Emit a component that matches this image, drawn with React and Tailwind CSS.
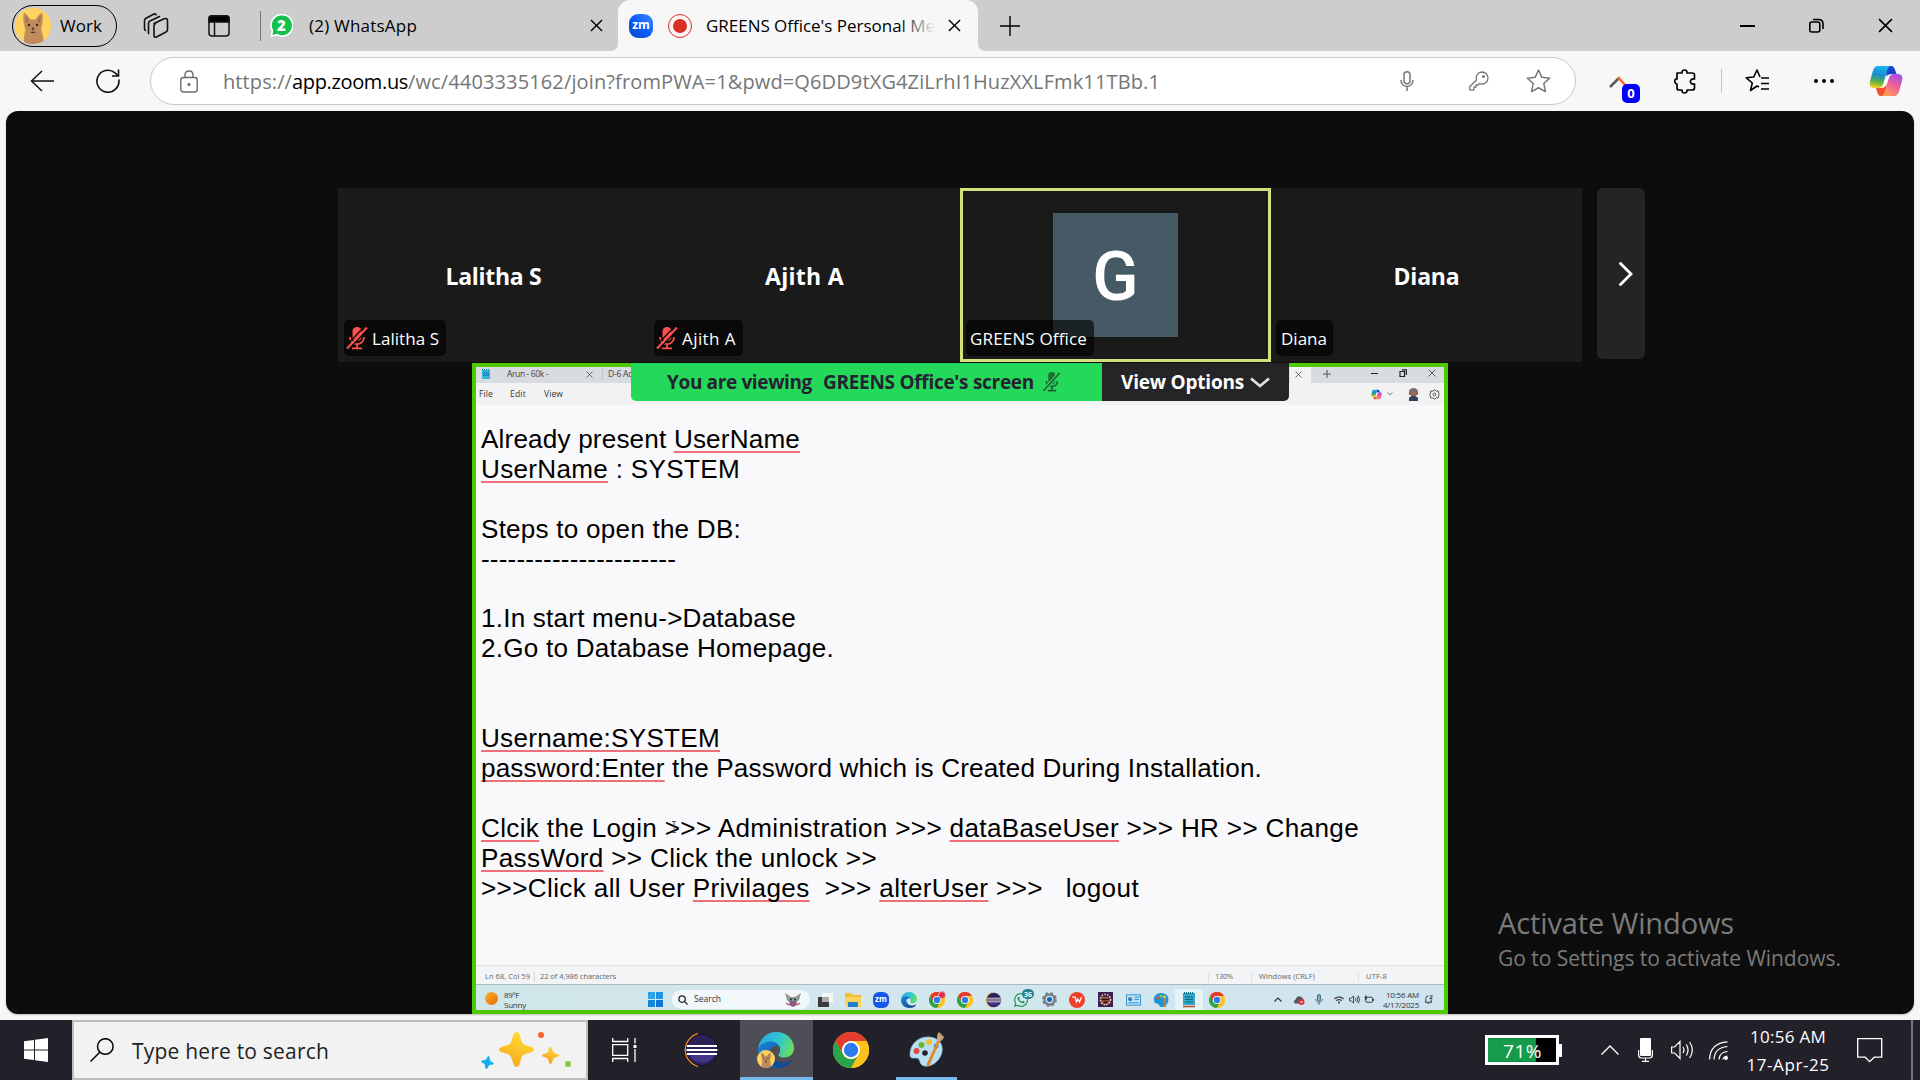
import React, { useLayoutEffect, useRef, useState } from "react";
import { FaWhatsapp, FaWifi } from "react-icons/fa";

/* One line of text whose letter spacing is tuned so that it spans `w` pixels. */
function Fit({ w, className = "", children }) {
  const ref = useRef(null);
  const [gap, setGap] = useState(0);
  useLayoutEffect(() => {
    const n = ref.current.textContent.length;
    setGap((w - ref.current.getBoundingClientRect().width) / n);
  }, [w]);
  return (
    <span ref={ref} className={"inline-block shrink-0 whitespace-pre " + className} style={{ letterSpacing: gap + "px" }}>
      {children}
    </span>
  );
}

function Cross({ className }) {
  return (
    <svg viewBox="0 0 14 14" className={className} fill="none" stroke="currentColor" strokeWidth="1.5">
      <path d="M1 1l12 12M13 1L1 13" />
    </svg>
  );
}

function Cat({ className }) {
  return (
    <svg viewBox="0 0 36 36" className={className}>
      <circle cx="18" cy="18" r="18" fill="#ffd35c" />
      <path d="M9 34c0-6 .5-9 1.500-12C8.500 15 7.500 10 9 4.500c3 2 5 4.500 6.500 7h5c1.500-2.500 3.500-5 6.500-7 1.500 5.500.5 10.500-1 17.500 1.500 3 2.500 7 2.500 11C22 37 14 37 9 34z" fill="#c08c5e" />
      <path d="M10.500 8c2 2 2.600 3 3.200 5l-3 2zM25.500 8c-2 2-2.600 3-3.200 5l3 2z" fill="#a8744a" />
      <circle cx="14" cy="17" r="1.200" fill="#3a2418" />
      <circle cx="22" cy="17" r="1.200" fill="#3a2418" />
      <path d="M16.800 20h2.400L18 21.600zM18 21.500v2m-2.500.5q2.500 1.500 5 0" fill="#3a2418" stroke="#3a2418" strokeWidth=".6" />
    </svg>
  );
}

function Copilot({ className, id }) {
  return (
    <svg viewBox="0 0 34 32" className={className}>
      <defs>
        <linearGradient id={id + "a"} x1=".5" y1="0" x2=".35" y2="1">
          <stop offset="0" stopColor="#18b4ee" />
          <stop offset=".4" stopColor="#1b8fd0" />
          <stop offset=".7" stopColor="#54b04a" />
          <stop offset="1" stopColor="#f3d21a" />
        </linearGradient>
        <linearGradient id={id + "b"} x1=".8" y1="0" x2=".3" y2="1">
          <stop offset="0" stopColor="#a24df0" />
          <stop offset=".5" stopColor="#ee5f9a" />
          <stop offset="1" stopColor="#ff9a56" />
        </linearGradient>
      </defs>
      <path d="M17 1h5c2.500 0 3.600 2 4.300 4.500L27.500 9h-5c-3 0-4 1.500-5 4.500z" fill="#1744c9" />
      <path d="M17 31h-5c-2.500 0-3.300-2-4-4.500L7 23h5c3 0 4.500-1.500 5.500-4.500z" fill="#f4512c" />
      <path d="M9 1h12c-2 1.500-2.700 4-3.500 7l-3 10c-1 3.500-2.500 5-5.500 5H5c-4 0-5-3-4-7L4 5.500C5 2.500 6.500 1 9 1z" fill={"url(#" + id + "a)"} />
      <path d="M25 31H13c2-1.500 2.700-4 3.500-7l3-10c1-3.500 2.500-5 5.500-5h4c4 0 5 3 4 7l-3 10.500c-1 3-2.500 4.500-5 4.500z" fill={"url(#" + id + "b)"} />
      <path d="M20.500 9.500c-2 .5-3.800 2-4.500 4.500l-2.500 8.500c2-.5 3.500-1.800 4.300-4.500z" fill="#fff" />
    </svg>
  );
}

function Edge({ className, id }) {
  return (
    <svg viewBox="0 0 36 36" className={className}>
      <defs>
        <linearGradient id={id + "a"} x1="0" y1=".3" x2="1" y2=".6">
          <stop offset="0" stopColor="#2aa7e6" />
          <stop offset=".55" stopColor="#2fc6cf" />
          <stop offset="1" stopColor="#6be05a" />
        </linearGradient>
        <linearGradient id={id + "b"} x1="0" y1="0" x2="1" y2="1">
          <stop offset="0" stopColor="#1a86d8" />
          <stop offset="1" stopColor="#0c4fa0" />
        </linearGradient>
      </defs>
      <path d="M0 17C1 7 9 0 18 0c10.500 0 18 7.500 18 16 0 6-4.500 9.500-9.500 9.500-4 0-6-1.300-6-2.600 0-1.200 1.700-1.900 1.700-5C22.200 13.500 18.500 10 12.500 10 7 10 2 13 0 17z" fill={"url(#" + id + "a)"} />
      <path d="M0 17c2-4.500 6.500-7.500 12-7.500 5 0 9 2.500 10 6.500-2-2-4.500-2.500-6.500-1.500-5 2.500-5.500 9-2 14 2.300 3.500 6 6 10.500 6.500-1.800.7-4 1-6 1C7.500 36 0 28 0 18z" fill={"url(#" + id + "b)"} />
      <path d="M13.500 20c-.5 6 5 10.500 11.500 10.500 3.500 0 6-1 8-2.300.8-.5 1.300 0 .8.800-2.300 3.800-6 6-10 6.700-6-.5-12-5-12-11.500 0-2 .7-3.500 1.700-4.200z" fill="#134a96" />
    </svg>
  );
}

function Chrome({ className }) {
  return (
    <svg viewBox="0 0 36 36" className={className}>
      <circle cx="18" cy="18" r="18" fill="#fbbc12" />
      <path d="M2.400 9A18 18 0 0 1 33.600 9H18a9 9 0 0 0-7.800 13.500z" fill="#e33b2e" />
      <path d="M2.400 9A18 18 0 0 0 18 36l7.800-13.500A9 9 0 0 1 10.200 22.500z" fill="#2ba24c" />
      <path d="M18 9h15.600A18 18 0 0 1 18 36l7.800-13.500A9 9 0 0 0 18 9z" fill="#fcc21b" />
      <circle cx="18" cy="18" r="9" fill="#fff" />
      <circle cx="18" cy="18" r="7.200" fill="#2f7bed" />
    </svg>
  );
}

function Eclipse({ className }) {
  return (
    <svg viewBox="0 0 36 36" className={className}>
      <path d="M16 1.500A17 17 0 0 0 16 34.500C6 30 4 23 4 18S6 6 16 1.500z" fill="#f7941e" stroke="#f7941e" />
      <circle cx="20" cy="18" r="15.700" fill="#2c2255" stroke="#15102b" />
      <path d="M7 22h26a14 14 0 0 1-26 0z" fill="#43358a" />
      <path d="M5 14h30M4.500 18h31M5 22h30" stroke="#fff" strokeWidth="1.800" />
    </svg>
  );
}

function Palette({ className }) {
  return (
    <svg viewBox="0 0 36 36" className={className}>
      <path d="M20 5C9 4 1 13 1 22c0 5 3 4 6 4 4 0 3 3 5 6 3 4 10 2 14-1 5-4 8-10 7-16S27 5.500 20 5z" fill="#b9dff2" stroke="#8cc3e2" strokeWidth=".7" />
      <circle cx="7.500" cy="19" r="3" fill="#e2483c" />
      <circle cx="12.500" cy="13" r="3" fill="#6cb83f" />
      <circle cx="20" cy="10" r="3" fill="#f5c32c" />
      <circle cx="27" cy="14" r="2.500" fill="#3aa0e0" />
      <circle cx="16" cy="21" r="2.800" fill="#22212a" />
      <path d="M30 8L19 33" stroke="#e08a2a" strokeWidth="3" strokeLinecap="round" />
      <path d="M28 8c0-4 0-6 2-8l5 5c-1 3-3 4-5 5z" fill="#c9a27a" />
    </svg>
  );
}

function MutedMic({ className }) {
  return (
    <svg viewBox="0 0 22 24" className={className}>
      <rect x="6.500" y="1" width="9" height="14" rx="4.500" fill="currentColor" />
      <path d="M4 11c0 9.500 14 9.500 14 0M11 18v4M6 22.300h10" stroke="currentColor" strokeWidth="1.800" fill="none" />
      <path d="M-.5 20.500L19 0M2.500 23.500L22 3" stroke="#0d0d0d" strokeWidth="1.300" />
      <path d="M1 22.500L21 1.500" stroke="currentColor" strokeWidth="2" />
    </svg>
  );
}

function Star({ className }) {
  return (
    <svg viewBox="0 0 24 24" className={className} fill="none" stroke="currentColor" strokeWidth="1.400" strokeLinejoin="round">
      <path d="M12 1l3.200 7 7.500.8-5.600 5.200 1.600 7.700L12 18l-6.700 3.700L6.900 14 1.300 8.800 8.800 8z" />
    </svg>
  );
}

function TabStrip() {
  return (
    <header className="flex h-[51px] items-center bg-[#cdcdcd] text-[17px] text-black">
      <div className="ml-3 flex h-[42px] w-[105px] shrink-0 items-center rounded-full border-[1.5px] border-black pl-[2px]">
        <Cat className="size-9" />
        <Fit w={42} className="ml-[9px]">Work</Fit>
      </div>
      <svg viewBox="0 0 26 26" className="ml-[26px] h-[26px] w-[26px] shrink-0" fill="none" stroke="#111" strokeWidth="1.600" strokeLinejoin="round" strokeLinecap="round">
        <path d="M11 10.500l10-4.700q3.500-1 3.500 2v9q0 1.500-1.500 2.200l-9.500 5q-2.500.8-2.500-1.500V13q0-1.800 1.500-2.500z" />
        <path d="M7 20.500V10.500q0-1.800 1.500-2.500l9.500-4.500M4 17.500q-1-.5-1-2V7.500q0-1.500 1.500-2.300L12.500 1q1.500-.5 2 .7" transform="translate(-1.500 0)" />
      </svg>
      <svg viewBox="0 0 22 22" className="ml-[39px] size-[22px] shrink-0" fill="none" stroke="#111" strokeWidth="1.500">
        <rect x="1" y="1" width="20" height="20" rx="3" />
        <path d="M1 3q0-2 2-2h16q2 0 2 2v4H1z" fill="#000" />
        <path d="M6.500 7v14" />
      </svg>
      <div className="ml-[30px] h-[30px] w-px shrink-0 bg-[#777]" />
      <div className="relative ml-[9px] flex size-[23px] shrink-0 items-center justify-center">
        <svg viewBox="0 0 23 24" className="absolute inset-0 size-full">
          <path d="M12 0a11.500 12 0 1 1-5 22.500L0 24l1.200-6A11.500 12 0 0 1 12 0z" fill="#fff" />
          <path d="M12 1.500a10 10.300 0 1 1-5 19L2 21.800l1-4.600A10 10.300 0 0 1 12 1.500z" fill="#12c14b" />
        </svg>
        <span className="relative font-['Open_Sans',sans-serif] text-[15px] leading-none font-extrabold text-white">2</span>
      </div>
      <Fit w={108} className="ml-4">(2) WhatsApp</Fit>
      <Cross className="ml-[173px] size-[13px] shrink-0" />
      <div className="relative ml-[15px] flex h-full w-[360px] shrink-0 items-center rounded-t-[12px] bg-[#f7f7f7] pl-[11px]">
        <svg viewBox="0 0 8 8" className="absolute bottom-0 -left-2 size-2"><path d="M8 0v8H0q8 0 8-8z" fill="#f7f7f7" /></svg>
        <svg viewBox="0 0 8 8" className="absolute -right-2 bottom-0 size-2"><path d="M0 0v8h8Q0 8 0 0z" fill="#f7f7f7" /></svg>
        <div className="flex size-6 items-center justify-center rounded-[9px] bg-gradient-to-bl from-[#3f8bff] via-[#0b5cff] to-[#0846c4] pb-[2px] text-[12px] leading-none font-bold text-white">zm</div>
        <div className="ml-[15px] flex size-6 shrink-0 items-center justify-center rounded-full border-[1.5px] border-[#d93025] bg-[#fdf5f5]">
          <div className="size-[14px] rounded-full bg-[#d93025]" />
        </div>
        <div className="relative ml-[14px] w-[229px] shrink-0">
          <Fit w={229}>GREENS Office's Personal Me</Fit>
          <div className="absolute inset-y-0 right-0 w-9 bg-gradient-to-r from-transparent to-[#f7f7f7]" />
        </div>
        <Cross className="ml-[13px] size-[13px] shrink-0" />
      </div>
      <svg viewBox="0 0 20 20" className="ml-[22px] size-5 shrink-0" stroke="#000" strokeWidth="1.400"><path d="M10 0v20M0 10h20" /></svg>
      <div className="ml-[720px] h-[2px] w-[15px] shrink-0 bg-black" />
      <svg viewBox="0 0 15 15" className="ml-[54px] size-[15px] shrink-0" fill="none" stroke="#000" strokeWidth="1.600">
        <rect x=".8" y="4" width="10" height="10" rx="2" /><path d="M4 1.500h5.500q4.500 0 4.500 4.500v5" />
      </svg>
      <Cross className="ml-[54px] size-[15px] shrink-0" />
    </header>
  );
}

function AddressRow() {
  return (
    <div className="flex h-[60px] items-center bg-[#f7f7f7] text-black">
      <svg viewBox="0 0 24 22" className="ml-[30px] h-[22px] w-6 shrink-0" fill="none" stroke="#111" strokeWidth="1.500"><path d="M24 11H1M12 1L1.500 11 12 21" /></svg>
      <svg viewBox="0 0 24 24" className="ml-[42px] size-6 shrink-0" fill="none" stroke="#111" strokeWidth="1.600"><path d="M22.800 10.500A11 11 0 1 1 19 3.800l3 3.200M22.500.5V7H16" /></svg>
      <div className="ml-[30px] flex h-12 w-[1426px] shrink-0 items-center rounded-full border border-[#cacaca] bg-white text-[#767676]">
        <svg viewBox="0 0 18 23" className="ml-[29px] h-[23px] w-[18px] shrink-0" fill="none" stroke="#6b6b6b" strokeWidth="1.400">
          <rect x=".8" y="7.500" width="16.400" height="14.500" rx="2.500" /><path d="M5 7.500V5q0-4 4-4t4 4v2.500" /><circle cx="9" cy="14.500" r=".9" fill="#6b6b6b" />
        </svg>
        <div className="ml-[25px] flex pt-[2px] text-[20px] leading-none">
          <Fit w={69}>https://</Fit>
          <Fit w={116} className="text-black">app.zoom.us</Fit>
          <Fit w={752}>/wc/4403335162/join?fromPWA=1&pwd=Q6DD9tXG4ZiLrhI1HuzXXLFmk11TBb.1</Fit>
        </div>
        <svg viewBox="0 0 14 20" className="ml-[240px] h-5 w-[14px] shrink-0" fill="none" stroke="currentColor" strokeWidth="1.500"><rect x="4" y=".8" width="6" height="12" rx="3" /><path d="M1 9c0 8.500 12 8.500 12 0M7 15.500V20" /></svg>
        <svg viewBox="0 0 20 20" className="ml-[55px] size-5 shrink-0" fill="none" stroke="currentColor" strokeWidth="1.300" strokeLinejoin="round"><path d="M13 1a6 6 0 0 1 0 12q-1.500 0-2.500-.5L9 14H7v2H5v2.500q-.5.700-1 .7H1.500q-.700 0-.700-.700V15.500L7.500 9A6 6 0 0 1 13 1z" /><circle cx="14.500" cy="5.500" r=".9" /></svg>
        <Star className="ml-[37px] size-[25px] shrink-0" />
      </div>
      <div className="relative ml-[33px] h-8 w-[31px] shrink-0">
        <svg viewBox="0 0 20 14" className="absolute top-[10px] left-0 h-[14px] w-5" fill="none" strokeWidth="2.600"><path d="M1 12l9-9" stroke="#5d5d5d" /><path d="M9 2l8 9" stroke="#ff6b2c" /></svg>
        <div className="absolute top-[19px] left-[13px] flex h-[19px] w-[18px] items-center justify-center rounded-[5px] bg-[#0000ff] text-[13px] leading-none font-bold text-white">0</div>
      </div>
      <svg viewBox="0 0 22 25" className="ml-[34px] h-[25px] w-[22px] shrink-0" fill="none" stroke="#000" strokeWidth="1.700" strokeLinejoin="round">
        <path d="M3 4h5c-.8-4 5.800-4 5 0h5q2.500 0 2.500 2v4c-5.500-1-5.500 6 0 5v4q0 2-2.500 2h-5c.8 4-5.800 4-5 0H5q-2 0-2-2v-4c-3-.500-3-5.500 0-5z" />
      </svg>
      <div className="ml-[25px] h-6 w-px shrink-0 bg-[#c4c4c4]" />
      <svg viewBox="0 0 25 25" className="ml-[23px] size-[25px] shrink-0" fill="none" stroke="#000" strokeWidth="1.600" strokeLinejoin="round"><path d="M14 18l-2-1-6.500 4.500L7.300 14 1.300 8.800 8.800 8 12 1l3 7M16 9h8M16 14.500h8M16 20h8" /></svg>
      <div className="ml-[44px] flex shrink-0 gap-1">
        <i className="size-1 rounded-full bg-black" /><i className="size-1 rounded-full bg-black" /><i className="size-1 rounded-full bg-black" />
      </div>
      <Copilot id="cpm" className="ml-[35px] h-[34px] w-[34px] shrink-0" />
    </div>
  );
}

function Tile({ name, nameW, tagW, muted, avatar, pad }) {
  return (
    <div className={"relative flex h-[174px] w-[311px] items-center justify-center bg-[#1a1a1a] " + (avatar ? "border-[3px] border-[#d5e07a]" : "")}>
      {avatar ? (
        <div className="flex h-[124px] w-[125px] items-center justify-center bg-[#455a64] pt-[3px] font-['Roboto',sans-serif] text-[68px] leading-none font-medium text-white">G</div>
      ) : (
        <Fit w={nameW} className="pt-[3px] text-[23px] leading-none font-bold">{name}</Fit>
      )}
      <div className={"absolute flex h-9 items-center rounded-[5px] bg-[rgba(0,0,0,0.62)] " + (avatar ? "bottom-[3px] left-[3px] " : "bottom-[6px] left-[6px] ") + pad}>
        {muted && <MutedMic className="mr-1 h-6 w-[22px] shrink-0 text-[#ff5050]" />}
        <Fit w={tagW} className="text-[17px] leading-none">{name}</Fit>
      </div>
    </div>
  );
}

function Gallery() {
  return (
    <section className="mt-[77px] ml-[332px] flex h-[174px] text-white">
      <Tile name="Lalitha S" nameW={96} tagW={67} muted pad="w-[102px] pl-[2px]" />
      <Tile name="Ajith A" nameW={79} tagW={54} muted pad="w-[89px] -ml-px pl-[2px]" />
      <Tile name="GREENS Office" tagW={117} avatar pad="w-[128px] pl-[4px]" />
      <Tile name="Diana" nameW={66} tagW={46} pad="w-[57px] -ml-px pl-[5px]" />
      <button className="ml-[15px] flex h-[171px] w-[48px] items-center justify-center rounded-[6px] bg-[#242424] pl-[10px]">
        <svg viewBox="0 0 14 24" className="h-6 w-[14px]" fill="none" stroke="#fff" strokeWidth="2.800" strokeLinecap="round"><path d="M1.500 1.500l10.500 10.500L1.500 22.500" /></svg>
      </button>
    </section>
  );
}

function ShareBanner() {
  return (
    <div className="absolute -top-1 left-[155px] flex h-[38px] leading-none font-bold">
      <div className="flex w-[471px] items-center rounded-bl-[5px] bg-[#24d959] pl-9 text-[19px] text-[#232333]">
        <Fit w={145}>You are viewing</Fit>
        <Fit w={211} className="ml-[11px]">GREENS Office's screen</Fit>
        <svg viewBox="0 0 20 22" className="ml-2 h-[20px] w-[19px]">
          <rect x="6.500" y="0" width="7.500" height="13.500" rx="3.700" fill="#236b3a" />
          <path d="M4.500 10c0 8 12 8 12 0M10.500 16v4M6 20.500h9" stroke="#1f5c34" strokeWidth="1.800" fill="none" />
          <path d="M1 21L19 1" stroke="#24d959" strokeWidth="4" /><path d="M1 21L19 1" stroke="#1f5c34" strokeWidth="1.600" />
        </svg>
      </div>
      <div className="flex w-[187px] items-center rounded-br-[5px] bg-[#252527] pl-[19px] text-[19px] text-white">
        <Fit w={123}>View Options</Fit>
        <svg viewBox="0 0 20 11" className="ml-[6px] h-[11px] w-5" fill="none" stroke="#ddd" strokeWidth="2.800"><path d="M1 1.500l9 7.500 9-7.500" /></svg>
      </div>
    </div>
  );
}

function Misspelt({ children }) {
  return <span className="underline decoration-[#ee6f78] decoration-[1.600px] underline-offset-[3px] [text-decoration-skip-ink:none]">{children}</span>;
}

function Note({ w, children }) {
  return (
    <div className="h-[29.92px]">
      {w && <Fit w={w}>{children}</Fit>}
    </div>
  );
}

function Notepad() {
  return (
    <>
      <div className="flex h-4 items-center bg-[#d8dbe0] pb-[2px] text-[8.5px] leading-none text-[#444]">
        <svg viewBox="0 0 10 11" className="ml-[5px] h-[11px] w-[10px]"><path d="M1 1h8v9H1z" fill="#35b3e0" /><path d="M2 4h6M2 6h6" stroke="#137aa5" /><path d="M1 .5h8" stroke="#1b6e94" strokeDasharray="1 1" /></svg>
        <Fit w={41} className="ml-4">Arun - 60k -</Fit>
        <Cross className="ml-[38px] size-[7px]" />
        <div className="ml-[9px] h-3 w-px bg-[#c3c6cb]" />
        <Fit w={24} className="ml-[5px]">D-6 Ac</Fit>
        <div className="-mb-[2px] ml-[658px] flex h-4 w-[21px] items-center bg-[#f2f2f3] pb-[2px] pl-[5px]"><Cross className="size-[7px]" /></div>
        <svg viewBox="0 0 8 8" className="ml-[12px] size-2" stroke="#555"><path d="M4 0v8M0 4h8" /></svg>
        <div className="-mt-[2px] ml-[40px] h-px w-[7px] bg-[#222]" />
        <svg viewBox="0 0 8 8" className="-mt-[2px] ml-[21px] size-2" fill="none" stroke="#222" strokeWidth="1.200"><path d="M1 2.500h4.500V7.500H1zM3 .8h4.300V6" /></svg>
        <Cross className="-mt-[2px] ml-[21px] size-2" />
      </div>
      <div className="flex h-[22px] items-center bg-[#f2f2f3] text-[8.5px] leading-none text-[#333]">
        <Fit w={14} className="ml-[3px]">File</Fit>
        <Fit w={16} className="ml-[17px]">Edit</Fit>
        <Fit w={19} className="ml-[18px]">View</Fit>
        <Copilot id="cps" className="ml-[808px] h-[11px] w-[11px]" />
        <svg viewBox="0 0 8 5" className="ml-[5px] h-1 w-[6px]" fill="none" stroke="#444"><path d="M1 .5l3 3 3-3" /></svg>
        <svg viewBox="0 0 13 13" className="ml-[14px] size-[13px]"><path d="M2 7q-1-7 4.500-7T11 7z" fill="#77706e" /><circle cx="6.500" cy="6" r="3" fill="#a0674e" /><path d="M2 13V10q0-1 3-2h3q3 1 3 2v3z" fill="#31405e" /></svg>
        <svg viewBox="0 0 12 12" className="ml-[9px] size-[11px]" fill="none" stroke="#444"><path d="M6 .8l1.800 1.500 2.500.1.300 2.200L11 6l-.6 1.500-.3 2.200-2.500.1L6 11.200 4.200 9.800l-2.500-.1-.3-2.200L1 6l.6-1.500.3-2.200 2.500-.1z" /><circle cx="6" cy="6" r="1.500" /></svg>
      </div>
      <div className="relative h-[560px] bg-[#f9f8fb] pt-[20px] pl-[5px] font-['Liberation_Sans',Arial,sans-serif] text-[26.1px] leading-[29.92px] text-black">
        <Note w={319}>Already present <Misspelt>UserName</Misspelt></Note>
        <Note w={259}><Misspelt>UserName</Misspelt> : SYSTEM</Note>
        <Note />
        <Note w={260}>Steps to open the DB:</Note>
        <Note w={195}>----------------------</Note>
        <Note />
        <Note w={315}>1.In start menu-&gt;Database</Note>
        <Note w={353}>2.Go to Database Homepage.</Note>
        <Note />
        <Note />
        <Note w={239}><Misspelt>Username:SYSTEM</Misspelt></Note>
        <Note w={781}><Misspelt>password:Enter</Misspelt> the Password which is Created During Installation.</Note>
        <Note />
        <Note w={878}><Misspelt>Clcik</Misspelt> the Login &gt;&gt;&gt; Administration &gt;&gt;&gt; <Misspelt>dataBaseUser</Misspelt> &gt;&gt;&gt; HR &gt;&gt; Change</Note>
        <Note w={396}><Misspelt>PassWord</Misspelt> &gt;&gt; Click the unlock &gt;&gt;</Note>
        <Note w={658}>&gt;&gt;&gt;Click all User <Misspelt>Privilages</Misspelt>  &gt;&gt;&gt; <Misspelt>alterUser</Misspelt> &gt;&gt;&gt;   logout</Note>
        <svg viewBox="0 0 6 12" className="absolute top-[416px] left-[195px] h-3 w-[6px]" fill="none" stroke="#555"><path d="M1 .5h4M3 .5v11M1 11.500h4" /></svg>
      </div>
      <div className="flex h-[19px] items-center border-t border-[#e2e3e5] bg-[#f3f4f5] pt-[3px] text-[7.5px] leading-none text-[#666]">
        <Fit w={45} className="ml-[9px]">Ln 68, Col 59</Fit>
        <div className="ml-1 h-[10px] w-px bg-[#d8d8d8]" />
        <Fit w={76} className="ml-[5px]">22 of 4,986 characters</Fit>
        <div className="ml-[592px] h-[10px] w-px bg-[#e0e0e0]" />
        <Fit w={18} className="ml-[6px]">130%</Fit>
        <div className="ml-[18px] h-[10px] w-px bg-[#e0e0e0]" />
        <Fit w={56} className="ml-[7px]">Windows (CRLF)</Fit>
        <div className="ml-[43px] h-[10px] w-px bg-[#e0e0e0]" />
        <Fit w={21} className="ml-[7px]">UTF-8</Fit>
      </div>
    </>
  );
}

function SmallCell({ children, active }) {
  return (
    <div className={"relative flex h-full w-7 shrink-0 items-center justify-center " + (active ? "bg-[#e6f3f6]" : "")}>
      {children}
    </div>
  );
}

function SharedTaskbar() {
  return (
    <div className="flex h-[26px] items-center border-t border-[#a9b9be] bg-gradient-to-r from-[#cfe6ea] via-[#d3e7ee] to-[#cfe4ee] pt-[4px] text-[8px] leading-none text-[#333]">
      <div className="ml-[9px] -mt-[2px] size-[13px] rounded-full bg-gradient-to-br from-[#fbb324] to-[#e8690b]" />
      <div className="ml-[6px] flex w-[22px] flex-col gap-[2px]">
        <Fit w={15} className="self-start">89°F</Fit>
        <Fit w={22} className="self-start">Sunny</Fit>
      </div>
      <div className="ml-[122px] grid size-[15px] shrink-0 grid-cols-2 gap-px">
        <i className="bg-[#2da4ea]" /><i className="bg-[#1f95e2]" /><i className="bg-[#1787dc]" /><i className="bg-[#0c76d2]" />
      </div>
      <div className="ml-[9px] flex h-[19px] w-[138px] shrink-0 items-center rounded-full bg-[#f2f8fa]">
        <svg viewBox="0 0 11 11" className="ml-[6px] size-[10px]" fill="none" stroke="#222" strokeWidth="1.400"><circle cx="4.500" cy="4.500" r="3.500" /><path d="M7 7l3.500 3.500" /></svg>
        <Fit w={27} className="ml-[6px] text-[8.5px]">Search</Fit>
        <svg viewBox="0 0 16 14" className="ml-[64px] h-[14px] w-4"><path d="M0 0l6 4h4l6-4-2 7-3 3H5L2 7z" fill="#7f9f93" /><path d="M2 1.500l3 3-2 1zM14 1.500l-3 3 2 1z" fill="#d57aa0" /><path d="M5 8h6l1 4-4 2-4-2z" fill="#8b5a86" /><path d="M1 10l3 2M15 10l-3 2" stroke="#d8465d" strokeWidth="1.500" /><circle cx="6" cy="6.500" r=".9" fill="#222" /><circle cx="10" cy="6.500" r=".9" fill="#222" /></svg>
      </div>
      <div className="ml-px flex h-full w-[420px] shrink-0 items-center">
        <SmallCell><svg viewBox="0 0 16 14" className="h-[14px] w-4"><path d="M5 0h11v9H5z" fill="#f7f7f7" /><path d="M1 4h11v10H1z" fill="#3a3a3a" /><path d="M5 4h7v5H5z" fill="#aaa" /></svg></SmallCell>
        <SmallCell><svg viewBox="0 0 16 14" className="h-[14px] w-4"><path d="M0 0h6l2 2h8v12H0z" fill="#f3bd32" /><path d="M0 4h16v10H0z" fill="#fbd25c" /><path d="M4 9h8q1 0 1 1v4H3v-4q0-1 1-1z" fill="#1b7fce" /></svg></SmallCell>
        <SmallCell><div className="flex size-4 items-center justify-center rounded-[6px] bg-[#1457e6] pb-px text-[8px] font-bold text-white">zm</div></SmallCell>
        <SmallCell><Edge id="es" className="size-4" /></SmallCell>
        <SmallCell><Chrome className="size-4" /><i className="absolute top-[2px] right-[5px] size-2 rounded-full border border-[#f0a0a8] bg-[#d9364a]" /></SmallCell>
        <SmallCell><Chrome className="size-4" /></SmallCell>
        <SmallCell><Eclipse className="size-4" /></SmallCell>
        <SmallCell><FaWhatsapp className="size-4 text-[#23935a]" /><span className="absolute top-0 right-[1px] flex h-[10px] w-3 items-center justify-center rounded-full bg-[#25808a] text-[7px] font-bold text-white">36</span></SmallCell>
        <SmallCell><svg viewBox="0 0 16 16" className="size-[15px]"><circle cx="8" cy="8" r="6.600" fill="#76808a" stroke="#76808a" strokeWidth="2.600" strokeDasharray="2.900 2.280" /><circle cx="8" cy="8" r="6" fill="#76808a" /><circle cx="8" cy="8" r="4" fill="#dfe6ec" /><circle cx="8" cy="8" r="2.700" fill="#1565b8" /></svg></SmallCell>
        <SmallCell><svg viewBox="0 0 16 16" className="size-4"><circle cx="8" cy="8" r="8" fill="#f0402c" /><path d="M3 5h3l1.500 5L9 7l1.500 3L12.500 5M6 5l2 5" fill="none" stroke="#fff" strokeWidth="1.200" /></svg></SmallCell>
        <SmallCell><svg viewBox="0 0 16 16" className="size-[15px]"><path d="M0 0h16v16H0z" fill="#3b2152" /><path d="M3 5l10 0v7l-5 3-5-3z" fill="#a6562d" /><circle cx="8" cy="8" r="5.500" fill="none" stroke="#e8dccb" strokeWidth="1.500" strokeDasharray="1.500 1.500" /><path d="M4 8h8M6 11h4" stroke="#241224" strokeWidth="1.800" /></svg></SmallCell>
        <SmallCell><svg viewBox="0 0 16 12" className="h-3 w-[15px]"><path d="M.5.500h15v11H.5z" fill="#bfe6fb" stroke="#2b8ccb" /><circle cx="4.500" cy="5" r="2.300" fill="#1878c7" /><path d="M9 3h5M9 5.500h5M2.500 9h11" stroke="#2b8ccb" /><path d="M4.500 5V2.700A2.300 2.300 0 0 1 6.800 5z" fill="#f08b2b" /></svg></SmallCell>
        <SmallCell><svg viewBox="0 0 16 16" className="size-4"><path d="M8 1C3 1 0 5 1 9s5 2 5 4 3 3 6 1 4-6 3-9-4-4-7-4z" fill="#2196d6" /><circle cx="4.500" cy="6" r="1.500" fill="#e2483c" /><circle cx="8" cy="4" r="1.500" fill="#7ac943" /><circle cx="11.500" cy="5" r="1.500" fill="#f5c32c" /><path d="M12 7v8" stroke="#c57b3b" strokeWidth="2" /></svg></SmallCell>
        <SmallCell active><svg viewBox="0 0 12 16" className="h-4 w-3"><path d="M0 1h12v12H0z" fill="#2fa9c9" /><path d="M2 5h8M2 7.500h8M2 10h8" stroke="#0f6683" /><path d="M0 14.500h12" stroke="#b8532b" strokeWidth="1.600" /><path d="M1 1h10" stroke="#176b86" strokeWidth="2" strokeDasharray="1 1" /></svg></SmallCell>
        <SmallCell><Chrome className="size-4" /></SmallCell>
      </div>
      <svg viewBox="0 0 8 5" className="ml-[43px] h-[5px] w-2 shrink-0" fill="none" stroke="#333" strokeWidth="1.200"><path d="M.5 4.500L4 1l3.500 3.500" /></svg>
      <svg viewBox="0 0 12 10" className="ml-[11px] h-[10px] w-3 shrink-0"><path d="M2 8.500Q-.5 6 2.500 4.500 4 .5 7 1.500q3 .5 3.500 3.500v3.500z" fill="#57585c" /><circle cx="8.500" cy="7" r="3" fill="#e02f3c" /><path d="M7.500 6l2 2m0-2l-2 2" stroke="#fff" strokeWidth=".7" /></svg>
      <svg viewBox="0 0 8 11" className="ml-[10px] h-[11px] w-2 shrink-0" fill="none" stroke="#456f80"><rect x="2.500" y=".5" width="3" height="6.500" rx="1.500" fill="#89a9b5" /><path d="M.7 5c0 4.500 6.600 4.500 6.600 0M4 8.500V11" /></svg>
      <FaWifi className="ml-[11px] size-[10px] shrink-0 text-[#444]" />
      <svg viewBox="0 0 12 10" className="ml-[5px] h-[9px] w-[11px] shrink-0" fill="none" stroke="#333"><path d="M.5 3.500H2.500L5 1v8L2.500 6.500H.5zM7 3.500q1 1.500 0 3M8.700 2q2 3 0 6M10.300.700q2.500 4.300 0 8.600" /></svg>
      <svg viewBox="0 0 11 9" className="ml-[4px] h-[9px] w-[10px] shrink-0" fill="none" stroke="#333"><rect x="2" y="2" width="7.500" height="5.500" rx="1" /><path d="M10.500 4v2M2 0v5M.5 2.500h3" strokeWidth="1.300" /></svg>
      <div className="ml-[9px] flex w-[36px] shrink-0 flex-col items-end gap-[2px]">
        <Fit w={33}>10:56 AM</Fit>
        <Fit w={36}>4/17/2025</Fit>
      </div>
      <svg viewBox="0 0 10 10" className="ml-[5px] size-[9px] shrink-0" fill="none" stroke="#333"><path d="M1 8h8M2 8V4q0-3 3-3M8 5v3M4 9.500h2M6.500 1h3l-3 3h3" /></svg>
    </div>
  );
}

function Spark({ className, from, to }) {
  return (
    <svg viewBox="0 0 34 34" className={className}>
      <defs><linearGradient id={"g" + from.slice(1)} x1=".7" y1="0" x2=".3" y2="1"><stop offset="0" stopColor={from} /><stop offset="1" stopColor={to} /></linearGradient></defs>
      <path d="M17 0c2 0 3 2 4 6s2 6 6 7 7 2 7 4-3 3-7 4-5 3-6 7-2 6-4 6-3-2-4-6-2-6-6-7-7-2-7-4 3-3 7-4 5-3 6-7 2-6 4-6z" fill={"url(#g" + from.slice(1) + ")"} />
    </svg>
  );
}

function Taskbar() {
  return (
    <footer className="flex h-[60px] items-center bg-[#22212a] text-white">
      <svg viewBox="0 0 24 24" className="ml-6 size-6 shrink-0" fill="#fff"><path d="M0 3.300L10 2v9.500H0zM11 1.800L24 0v11.500H11zM0 12.500h10V22L0 20.700zM11 12.500h13V24l-13-1.800z" /></svg>
      <div className="relative ml-6 flex h-[60px] w-[516px] shrink-0 items-center border-2 border-[#bdbdbd] bg-[#f2f2f2]">
        <svg viewBox="0 0 24 24" className="ml-4 size-6" fill="none" stroke="#000" strokeWidth="1.500"><circle cx="15.300" cy="8.500" r="7.800" /><path d="M10 14L.5 23.500" /></svg>
        <Fit w={197} className="ml-[18px] pt-[3px] text-[21px] leading-none text-[#222]">Type here to search</Fit>
        <div className="absolute top-[10px] left-[407px] h-10 w-[94px]">
          <Spark from="#ffdf2e" to="#f7a823" className="absolute top-0 left-[18px] size-[35px]" />
          <Spark from="#ffd83a" to="#f3a01f" className="absolute top-[15px] left-[61px] size-[17px]" />
          <Spark from="#17b6f5" to="#06a5ee" className="absolute top-[24px] left-0 size-[13px] rotate-12" />
          <i className="absolute top-0 left-[57px] size-[6px] rounded-full bg-[#f2652a]" />
          <i className="absolute top-[29px] left-[84px] size-[6px] rounded-full bg-[#8cc63f]" />
        </div>
      </div>
      <svg viewBox="0 0 25 24" className="ml-6 h-6 w-[25px] shrink-0" fill="none" stroke="#fff" strokeWidth="1.300"><path d="M.7 0v3.500h15V0M.7 24v-3.500h15V24M.7 6.700h15v10.600H.7zM23 0v5.500M23 11v13" /><path d="M21.500 7h3v3h-3z" fill="#fff" stroke="none" /></svg>
      <Eclipse className="ml-[45px] h-9 w-9 shrink-0" />
      <div className="relative ml-[22px] flex h-full w-[73px] shrink-0 items-center border-b-[3px] border-[#76b9ed] bg-[#4f4e56] pt-[3px] pl-[18px]">
        <Edge id="eb" className="size-9" />
        <Cat className="absolute top-[30px] left-[17px] size-[18px]" />
      </div>
      <Chrome className="ml-[20px] size-9 shrink-0" />
      <div className="ml-[27px] flex h-full w-[61px] shrink-0 items-center justify-center border-b-[3px] border-[#76b9ed] pt-[3px]">
        <Palette className="size-9" />
      </div>
      <div className="ml-[528px] flex h-[30px] w-[74px] shrink-0 items-center border-[3px] border-white bg-black">
        <div className="relative h-full w-[48px] border border-l-0 border-[#0c8a42] bg-[#169b4b]">
          <Fit w={39} className="absolute top-[3px] left-[15px] text-[19px] leading-none">71%</Fit>
        </div>
      </div>
      <div className="h-[13px] w-[3px] shrink-0 bg-white" />
      <svg viewBox="0 0 18 10" className="ml-[39px] h-[10px] w-[18px] shrink-0" fill="none" stroke="#fff" strokeWidth="1.400"><path d="M.5 9.500L9 1l8.500 8.500" /></svg>
      <svg viewBox="0 0 15 24" className="ml-[19px] h-6 w-[15px] shrink-0"><rect x="2" y="0" width="11" height="18" rx="1" fill="#fff" /><path d="M.6 12v5q0 3 3 3h7.800q3 0 3-3v-5M7.500 20v3.300M4 23.300h7" fill="none" stroke="#fff" strokeWidth="1.200" /></svg>
      <svg viewBox="0 0 23 20" className="ml-[18px] h-5 w-[23px] shrink-0" fill="none" stroke="#fff" strokeWidth="1.200"><path d="M.6 7h3L9 1.500v17L3.600 13h-3zM12 7q2 3 0 6M15.300 4.500q3.500 5.500 0 11M18.600 2q5.500 8 0 16" /></svg>
      <svg viewBox="0 0 19 19" className="ml-[15px] size-[19px] shrink-0" fill="none" stroke="#fff" strokeWidth="1.200"><path d="M.6 18.500Q1 2 18.500.8M5 18.500Q5.500 6.500 18.500 5.500M10 18.500q.5-7.500 8.500-8" /><path d="M14 18.500q.5-3 4.500-3.500" /><circle cx="17" cy="17" r="1.300" fill="#fff" /></svg>
      <div className="ml-[18px] flex h-full w-[84px] shrink-0 flex-col items-center gap-[11px] pt-[8px] text-[17px] leading-[17px]">
        <Fit w={76}>10:56 AM</Fit>
        <Fit w={83}>17-Apr-25</Fit>
      </div>
      <svg viewBox="0 0 26 25" className="ml-[27px] h-[25px] w-[26px] shrink-0" fill="none" stroke="#fff" strokeWidth="1.300"><path d="M.7.700h24v18.500h-7.500l-4.500 4.500-4.500-4.500H.7z" /></svg>
      <div className="ml-[28px] h-full w-[2px] shrink-0 bg-[#77767b]" />
    </footer>
  );
}

export default function App() {
  return (
    <div className="flex h-[1080px] w-[1920px] flex-col overflow-hidden bg-[#f7f7f7] font-['Open_Sans','Noto_Sans',sans-serif]">
      <TabStrip />
      <AddressRow />
      <main className="relative ml-[6px] h-[903px] w-[1908px] overflow-hidden rounded-[12px] bg-[#0d0d0d] shadow-[0_1px_2px_#bbb]">
        <Gallery />
        <div className="relative mt-px ml-[466px] h-[651px] w-[976px] border-4 border-[#4cc900]">
          <Notepad />
          <SharedTaskbar />
          <ShareBanner />
        </div>
        <div className="absolute top-[797px] left-[1492px] flex flex-col leading-none text-[#7b7b7b]">
          <Fit w={236} className="self-start text-[29px]">Activate Windows</Fit>
          <Fit w={343} className="mt-[11px] self-start text-[21px]">Go to Settings to activate Windows.</Fit>
        </div>
      </main>
      <div className="h-[6px] shrink-0" />
      <Taskbar />
    </div>
  );
}
